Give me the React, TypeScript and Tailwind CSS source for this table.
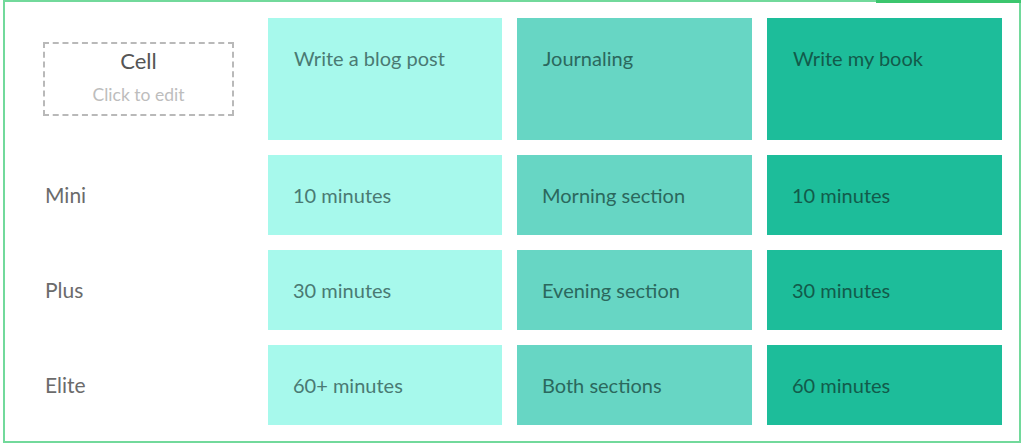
import React from 'react';

const COLUMNS = [
    { title: 'Write a blog post', bg: 'bg-[#a7f9ec]', text: 'text-[#4a7a73]', items: ['10 minutes', '30 minutes', '60+ minutes'] },
    { title: 'Journaling', bg: 'bg-[#67d6c4]', text: 'text-[#2b685d]', items: ['Morning section', 'Evening section', 'Both sections'] },
    { title: 'Write my book', bg: 'bg-[#1dbd9a]', text: 'text-[#125b4b]', items: ['10 minutes', '30 minutes', '60 minutes'] },
];

const LEVELS = ['Mini', 'Plus', 'Elite'];

export default function App() {
    return (
        <div className="w-[1023px] h-[445px] bg-white pl-[3px] font-['Lato','Liberation_Sans',sans-serif]">
            <div className="relative w-[1018px] h-[443px] border-2 border-[#72d99b] pl-[38px] pt-[16px]">
                {/* darker segment on the top edge */}
                <div className="absolute -top-[2px] -right-[2px] w-[145px] h-[3px] bg-[#3cc66e]" />

                <div className="grid grid-cols-[210px_234px_235px_235px] grid-rows-[122px_80px_80px_80px] gap-[15px]">
                    {/* header row */}
                    <div className="flex items-center">
                        <div className="w-[191px] h-[74px] border-2 border-dashed border-[#b9b9b9] flex flex-col items-center pt-[3px]">
                            <span className="text-[22px] leading-[28px] text-[#555]">Cell</span>
                            <span className="text-[17.5px] leading-[22px] mt-[9px] text-[#bdbdbd]">Click to edit</span>
                        </div>
                    </div>
                    {COLUMNS.map((col) => (
                        <div key={col.title} className={`${col.bg} ${col.text} pl-[26px] pt-[26px] text-[20px] leading-[28px]`}>
                            {col.title}
                        </div>
                    ))}

                    {/* body rows */}
                    {LEVELS.map((level, i) => (
                        <React.Fragment key={level}>
                            <div className="flex items-center pl-[2px] text-[21px] text-[#6b6b6b]">{level}</div>
                            {COLUMNS.map((col) => (
                                <div key={col.title} className={`${col.bg} ${col.text} flex items-center pl-[25px] text-[20px]`}>
                                    {col.items[i]}
                                </div>
                            ))}
                        </React.Fragment>
                    ))}
                </div>
            </div>
        </div>
    );
}
